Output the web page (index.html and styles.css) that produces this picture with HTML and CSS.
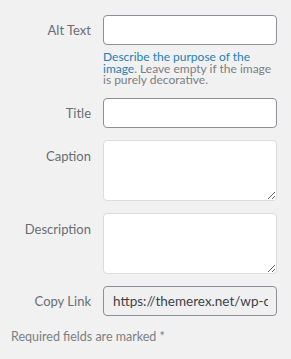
FILE: index.html
```html
<!DOCTYPE html>
<html lang="en">
<head>
    <meta charset="UTF-8">
    <meta name="viewport" content="width=device-width, initial-scale=1.0">
    <title>Attachment details</title>
    <link rel="stylesheet" href="styles.css">
</head>
<body>

    <div class="settings">
        <label class="setting-label" for="altText">Alt Text</label>
        <div class="setting-field">
            <input type="text" id="altText" class="field">
            <p class="help">
                <a href="#">Describe the purpose of the image</a>. Leave empty if the image is purely decorative.
            </p>
        </div>

        <label class="setting-label" for="title">Title</label>
        <div class="setting-field">
            <input type="text" id="title" class="field">
        </div>

        <label class="setting-label top" for="caption">Caption</label>
        <div class="setting-field">
            <textarea id="caption" class="area"></textarea>
        </div>

        <label class="setting-label top" for="description">Description</label>
        <div class="setting-field">
            <textarea id="description" class="area"></textarea>
        </div>

        <label class="setting-label" for="copyLink">Copy Link</label>
        <div class="setting-field">
            <input type="text" id="copyLink" class="field readonly" value="https://themerex.net/wp-content/uploads/image.jpg" readonly>
        </div>
    </div>

    <p class="required">Required fields are marked <span>*</span></p>

</body>
</html>
```

FILE: styles.css
```css
body {
    margin: 0;
    background: #f1f1f1;
    font-family: Lato, "Open Sans", sans-serif;
    color: #646970;
    width: 291px;
    height: 359px;
    overflow: hidden;
}

/* Filas de ajustes */
.settings {
    display: grid;
    grid-template-columns: 83px 174px;
    column-gap: 12px;
    row-gap: 12px;
    padding: 15px 0 0 8px;
    align-items: start;
}
.setting-label {
    font-size: 13px;
    line-height: 30px;
    text-align: right;
    color: #6a6e73;
}
.setting-label.top {
    line-height: 16px;
    padding-top: 8px;
}
.setting-field {
    display: flex;
    flex-direction: column;
}

.field,
.area {
    box-sizing: border-box;
    width: 174px;
    margin: 0;
    border-radius: 4px;
    background: #fff;
    font-family: Lato, "Open Sans", sans-serif;
    font-size: 13.5px;
    color: #2c3338;
    outline: none;
}
.field {
    height: 30px;
    border: 1px solid #8c8f94;
    padding: 0 8px;
}
.area {
    height: 61px;
    border: 1px solid #dcdcde;
    resize: vertical;
}
.field.readonly {
    background: #f0f0f1;
    border-color: #8c8f94;
    padding-left: 9px;
    color: #3c434a;
}

.help {
    margin: 6px 0 0;
    font-size: 12px;
    line-height: 11.5px;
    color: #7b7f84;
}
.help a {
    color: #2580b5;
    text-decoration: none;
}

.required {
    margin: 13px 0 0 11px;
    font-size: 12.5px;
    color: #7b7f84;
}
```
